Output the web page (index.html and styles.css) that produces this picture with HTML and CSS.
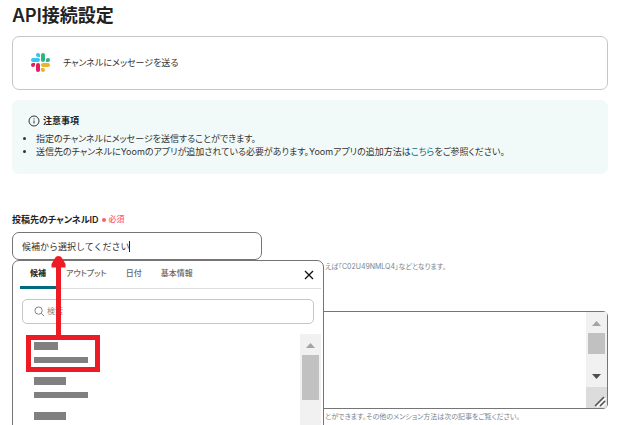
FILE: index.html
```html
<!DOCTYPE html>
<html lang="ja">
<head>
<meta charset="utf-8">
<title>API接続設定</title>
<link rel="stylesheet" href="styles.css">
</head>
<body>
<main class="page">
  <h1 class="title">API接続設定</h1>

  <section class="card">
    <svg class="slack" viewBox="0 0 19 19" aria-hidden="true">
      <g fill="#36c5f0"><rect x="0" y="5" width="9" height="4" rx="2"/><path d="M7 0a2 2 0 0 1 2 2v2H7a2 2 0 0 1 0-4z"/></g>
      <g fill="#2eb67d"><rect x="10" y="0" width="4" height="9" rx="2"/><path d="M19 7a2 2 0 0 1-2 2h-2V7a2 2 0 0 1 4 0z"/></g>
      <g fill="#ecb22e"><rect x="10" y="10" width="9" height="4" rx="2"/><path d="M12 19a2 2 0 0 1-2-2v-2h2a2 2 0 0 1 0 4z"/></g>
      <g fill="#e01e5a"><rect x="5" y="10" width="4" height="9" rx="2"/><path d="M0 12a2 2 0 0 1 2-2h2v2a2 2 0 0 1-4 0z"/></g>
    </svg>
    <span>チャンネルにメッセージを送る</span>
  </section>

  <section class="notice">
    <h2 class="notice-title">
      <svg class="info" viewBox="0 0 12 12" aria-hidden="true"><circle cx="6" cy="6" r="5"/><path d="M6 5.500v3M6 3.300v1.100"/></svg>
      注意事項
    </h2>
    <ul class="notice-list">
      <li>指定のチャンネルにメッセージを送信することができます。</li>
      <li>送信先のチャンネルにYoomのアプリが追加されている必要があります。Yoomアプリの追加方法は<a href="#help">こちら</a>をご参照ください。</li>
    </ul>
  </section>

  <section class="field">
    <div class="label-row">
      <label for="channel">投稿先のチャンネルID</label>
      <span class="required"><i class="dot"></i>必須</span>
    </div>
    <div class="combo">
      <input class="combo-input" id="channel" type="text" value="候補から選択してください">
      <span class="caret"></span>

      <div class="popup">
        <div class="tabs">
          <button class="tab active" type="button">候補</button>
          <button class="tab" type="button">アウトプット</button>
          <button class="tab" type="button">日付</button>
          <button class="tab" type="button">基本情報</button>
          <button class="close" type="button" aria-label="閉じる">
            <svg viewBox="0 0 10 10" aria-hidden="true"><path d="M1 1l8 8M9 1L1 9"/></svg>
          </button>
        </div>
        <div class="search">
          <svg viewBox="0 0 12 12" aria-hidden="true"><circle cx="5" cy="5" r="4"/><path d="M8 8l3 3"/></svg>
          <input type="search" placeholder="検索" aria-label="検索">
        </div>
        <div class="results">
          <div class="options">
            <div class="option"><i class="name short"></i><i class="id"></i></div>
            <div class="option"><i class="name"></i><i class="id"></i></div>
            <div class="option"><i class="name"></i><i class="id"></i></div>
          </div>
          <div class="scrollbar">
            <svg class="arrow up" viewBox="0 0 21 21" aria-hidden="true"><path d="M6 14l4.500-5L15 14z"/></svg>
            <div class="thumb long"></div>
          </div>
        </div>
      </div>

      <svg class="callout" viewBox="0 0 74 116" aria-hidden="true">
        <rect x="2.500" y="81.500" width="69" height="32"/>
        <path d="M32.500 80V9"/>
        <path class="head" d="M32.500 0Q35 0 36 2L39.500 8V11.500H25.500V8L29 2Q30 0 32.500 0z"/>
      </svg>
    </div>
    <p class="hint">えば「C02U49NMLQ4」などとなります。</p>
  </section>

  <section class="message">
    <div class="textbox">
      <textarea aria-label="メッセージ"></textarea>
      <div class="scrollbar">
        <svg class="arrow up" viewBox="0 0 21 21" aria-hidden="true"><path d="M6 14l4.500-5L15 14z"/></svg>
        <div class="thumb"></div>
        <svg class="arrow down" viewBox="0 0 21 21" aria-hidden="true"><path d="M6 8l4.500 5L15 8z"/></svg>
        <svg class="grip" viewBox="0 0 21 21" aria-hidden="true"><path class="light" d="M11 20l9-9M16 20l4-4"/><path d="M9 19l9-9M14 19l5-5"/></svg>
      </div>
    </div>
    <p class="hint">とができます。その他のメンション方法は次の記事をご覧ください。</p>
  </section>
</main>
</body>
</html>
```
FILE: styles.css
```css
* {
  box-sizing: border-box;
}

body {
  margin: 0;
  background: #fff;
  color: #333;
  font-family: Inter, "Noto Sans CJK JP", sans-serif;
  font-size: 9px;
  line-height: 13px;
  font-feature-settings: "palt";
}

input,
button,
textarea {
  font: inherit;
  color: inherit;
}

.page {
  height: 100vh;
  padding: 4px 14px 0 12px;
  overflow: hidden;
}

.title {
  margin: 0 0 8px;
  color: #222;
  font-size: 18px;
  line-height: 24px;
  font-weight: 600;
}

.card {
  display: flex;
  align-items: center;
  gap: 13px;
  height: 54px;
  padding: 0 18px 2px;
  border: 1px solid #c6c6c6;
  border-radius: 7px;
}

.slack {
  width: 19px;
  height: 19px;
}

.notice {
  margin-top: 10px;
  padding: 14px 16px 16px;
  border-radius: 7px;
  background: #f2faf9;
}

.notice-title {
  display: flex;
  align-items: center;
  gap: 3px;
  margin: 0 0 5px;
  font-size: 9px;
  font-weight: 600;
  color: #222;
}

.info {
  width: 12px;
  height: 12px;
  fill: none;
  stroke: #333;
}

.notice-list {
  margin: 0;
  padding-left: 8px;
}

.notice-list a {
  color: #007088;
  text-decoration: none;
}

.field {
  margin-top: 39px;
}

.label-row {
  display: flex;
  align-items: center;
  gap: 3px;
  height: 13px;
  margin-bottom: 6px;
  color: #222;
  font-weight: 600;
}

.required {
  display: flex;
  align-items: center;
  gap: 3px;
  color: #ff5a6e;
  font-size: 8px;
  font-weight: 500;
}

.dot {
  width: 4px;
  height: 4px;
  border-radius: 50%;
  background: #ff5a6e;
}

.combo {
  position: relative;
  width: 250px;
}

.combo-input {
  display: block;
  width: 100%;
  height: 28px;
  padding: 0 9px;
  border: 1px solid #757575;
  border-radius: 7px;
  font-feature-settings: normal;
  outline: none;
}

.caret {
  position: absolute;
  top: 9px;
  left: 117px;
  width: 1px;
  height: 11px;
  background: #222;
}

.popup {
  position: absolute;
  top: 28px;
  left: 0;
  z-index: 1;
  width: 312px;
  border: 1px solid #757575;
  border-radius: 7px 7px 0 0;
  background: #fff;
}

.tabs {
  display: flex;
  gap: 1px;
  height: 28px;
  margin: 0 2px 0 7px;
  border-bottom: 1px solid #ddd;
}

.tab {
  padding: 0 9px;
  border: 0;
  border-bottom: 3px solid transparent;
  background: none;
  color: #666;
  font-size: 8px;
  font-weight: 500;
}

.tab.active {
  margin-bottom: -1px;
  padding: 0 10px;
  border-bottom-color: #006a80;
  border-radius: 3px 3px 0 0;
  color: #222;
  font-weight: 700;
}

.close {
  margin-left: auto;
  padding: 0 7px;
  border: 0;
  background: none;
}

.close svg {
  display: block;
  width: 10px;
  height: 10px;
  fill: none;
  stroke: #111;
  stroke-width: 1.3;
}

.search {
  display: flex;
  align-items: center;
  gap: 2px;
  height: 25px;
  margin: 10px 9px;
  padding: 0 11px;
  border: 1px solid #c6c6c6;
  border-radius: 5px;
}

.search svg {
  width: 11px;
  height: 11px;
  fill: none;
  stroke: #777;
}

.search input {
  flex: 1;
  min-width: 0;
  padding: 0;
  border: 0;
  background: none;
  font-size: 8px;
}

.search input::placeholder {
  color: #888;
}

.results {
  display: flex;
  height: 100px;
  margin-right: 2px;
}

.options {
  display: flex;
  flex: 1;
  flex-direction: column;
  gap: 14px;
  padding: 8px 21px;
}

.option {
  display: grid;
  gap: 7px;
}

.name {
  width: 32px;
  height: 8px;
  background: #808080;
}

.name.short {
  width: 24px;
}

.id {
  width: 54px;
  height: 6px;
  background: #808080;
}

.scrollbar {
  display: flex;
  flex-direction: column;
  width: 21px;
  background: #f1f1f1;
}

.arrow,
.grip {
  flex: none;
  width: 21px;
  height: 21px;
}

.up {
  fill: #a3a3a3;
}

.down {
  margin-top: auto;
  fill: #505050;
}

.thumb {
  height: 21px;
  margin: 0 2px;
  background: #c1c1c1;
}

.thumb.long {
  height: 45px;
}

.grip {
  background: #dcdcdc;
  fill: none;
  stroke: #505050;
  stroke-width: 1.5;
}

.grip .light {
  stroke: #fff;
}

.callout {
  position: absolute;
  top: 24px;
  left: 14px;
  z-index: 2;
  width: 74px;
  height: 116px;
  fill: none;
  stroke: #ed1c24;
  stroke-width: 5;
}

.callout .head {
  fill: #ed1c24;
  stroke: none;
}

.hint {
  margin: 0;
  padding-left: 313px;
  color: #7b858c;
  font-size: 7px;
}

.message {
  margin-top: 38px;
}

.textbox {
  display: flex;
  height: 98px;
  margin-bottom: 1px;
  border: 1px solid #757575;
  border-radius: 5px;
}

.textbox textarea {
  flex: 1;
  min-width: 0;
  border: 0;
  background: none;
  resize: none;
}
```
